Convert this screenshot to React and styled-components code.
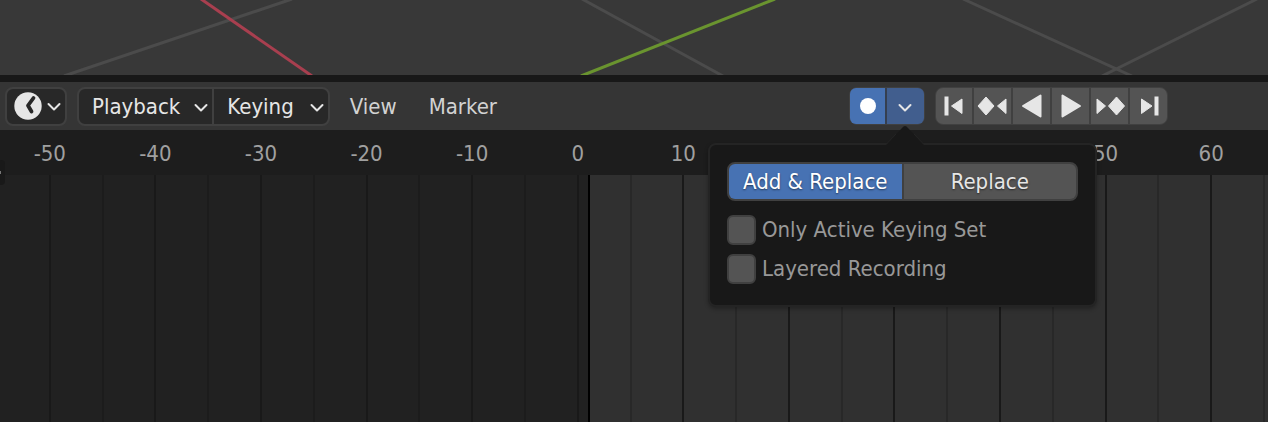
import React, { useState } from 'react'
import styled, { createGlobalStyle } from 'styled-components'

const FIRST = -55
const LAST = 65
const CURRENT = 1
const frames = [-50, -40, -30, -20, -10, 0, 10, 20, 30, 40, 50, 60]
const toPercent = (frame) => `${((frame - FIRST) / (LAST - FIRST)) * 100}%`

const Chevron = ({ size = 14 }) => (
    <svg width={size} height={size} viewBox="0 0 14 14" fill="none" stroke="currentColor" strokeWidth="2" strokeLinecap="round" strokeLinejoin="round" aria-hidden="true">
        <path d="M1.500 5l5.500 5.500L12.500 5" />
    </svg>
)

const ClockIcon = () => (
    <svg width="28" height="28" viewBox="0 0 28 28" aria-hidden="true">
        <circle cx="14" cy="14" r="13.700" fill="#e6e6e6" />
        <path d="M19.500 6L14 13.500l3.500 6" fill="none" stroke="#282828" strokeWidth="3.800" strokeLinecap="round" strokeLinejoin="round" />
    </svg>
)

const Glyph = ({ children }) => (
    <svg width="36" height="36" viewBox="0 0 36 36" fill="#e6e6e6" stroke="#e6e6e6" strokeLinejoin="round" aria-hidden="true">
        {children}
    </svg>
)

const transport = [
    { label: 'Jump to first frame', icon: <><path stroke="none" d="M8.500 8.500h4v19h-4z" /><path d="M26 11v14.500L15.500 18z" /></> },
    { label: 'Previous keyframe', icon: <><path d="M11 9L19 18l-8 9L3 18z" /><path d="M31 11v14.500L22.500 18z" /></> },
    { label: 'Play reverse', icon: <path strokeWidth="2" d="M26.500 7.500v21L9 18z" /> },
    { label: 'Play', icon: <path strokeWidth="2" d="M9.500 7.500v21L27 18z" /> },
    { label: 'Next keyframe', icon: <><path d="M24.500 9L32.500 18l-8 9L16.500 18z" /><path d="M5 11v14.500L13.500 18z" /></> },
    { label: 'Jump to last frame', icon: <><path stroke="none" d="M23.500 8.500h4v19h-4z" /><path d="M10.500 11v14.500L21 18z" /></> },
]

const App = () => {
    const [mode, setMode] = useState('Add & Replace')

    return (
        <Screen>
            <GlobalStyle />
            <Viewport>
                <svg width="1268" height="75" viewBox="0 0 1268 75" fill="none" strokeWidth="3" aria-hidden="true">
                    <path stroke="#4b4b4b" d="M64 76L292 -1M582 -1L723 76M963 -1L1132 76M1102 76L1257 -1" />
                    <path stroke="#a83f4f" d="M201 -1L312 76" />
                    <path stroke="#6a942f" d="M581 76L775 -1" />
                </svg>
            </Viewport>
            <Toolbar>
                <EditorButton aria-label="Editor type">
                    <ClockIcon />
                    <Chevron />
                </EditorButton>
                <MenuGroup>
                    <MenuButton>Playback <Chevron /></MenuButton>
                    <MenuButton>Keying <Chevron /></MenuButton>
                </MenuGroup>
                <PlainMenu>View</PlainMenu>
                <PlainMenu>Marker</PlainMenu>
                <AutoKey>
                    <RecordButton aria-label="Auto keying">
                        <Dot />
                    </RecordButton>
                    <KeyOptions aria-label="Auto keying options" aria-expanded="true">
                        <Chevron />
                    </KeyOptions>
                    <Popover>
                        <Arrow width="38" height="20" viewBox="0 0 38 20" aria-hidden="true">
                            <path fill="#181818" d="M0 20L16 3Q19 -1 22 3L38 20z" />
                            <path fill="none" stroke="#242424" d="M0 19.500L10 9M28 9L38 19.500" />
                        </Arrow>
                        <Segments>
                            {['Add & Replace', 'Replace'].map((name) => (
                                <Segment key={name} $active={mode === name} onClick={() => setMode(name)}>
                                    {name}
                                </Segment>
                            ))}
                        </Segments>
                        <Option>
                            <Checkbox type="checkbox" />
                            Only Active Keying Set
                        </Option>
                        <Option>
                            <Checkbox type="checkbox" />
                            Layered Recording
                        </Option>
                    </Popover>
                </AutoKey>
                <Transport>
                    {transport.map(({ label, icon }) => (
                        <TransportButton key={label} aria-label={label}>
                            <Glyph>{icon}</Glyph>
                        </TransportButton>
                    ))}
                </Transport>
            </Toolbar>
            <Ruler>
                <Scale>
                    {frames.map((frame) => <Label key={frame}>{frame}</Label>)}
                </Scale>
                <RegionToggle aria-label="Show channels" />
            </Ruler>
            <Track>
                <Lanes>
                    <ActiveRange style={{ left: toPercent(CURRENT) }} />
                    {frames.map((frame) => <Lane key={frame}><Line /></Lane>)}
                    <Playhead style={{ left: toPercent(CURRENT) }} />
                </Lanes>
            </Track>
        </Screen>
    )
}

const GlobalStyle = createGlobalStyle`
    * {
        box-sizing: border-box;
    }
    body {
        margin: 0;
        background: #212121;
    }
    body, button {
        font-family: "DejaVu Sans Condensed", "DejaVu Sans", sans-serif;
        font-size: 22px;
        line-height: 26px;
    }
    button {
        margin: 0;
        padding: 0;
        border: none;
        background: none;
        color: #e6e6e6;
        cursor: pointer;
    }
    svg {
        display: block;
        flex: none;
    }
`

const Screen = styled.div`
    display: flex;
    flex-direction: column;
    min-height: 100vh;
    overflow: hidden;
`

const Viewport = styled.div`
    height: 82px;
    overflow: hidden;
    background: #383838;
    border-bottom: 7px solid #181818;
`

const Toolbar = styled.div`
    display: flex;
    align-items: center;
    height: 48px;
    padding: 0 100px 0 5px;
    background: #353535;
`

const EditorButton = styled.button`
    display: flex;
    align-items: center;
    gap: 5px;
    height: 39px;
    padding: 0 4px 0 7px;
    border: 2px solid #404040;
    border-radius: 8px;
    background: #282828;
`

const MenuGroup = styled.div`
    display: flex;
    height: 39px;
    margin: 0 4px 0 10px;
    border: 2px solid #404040;
    border-radius: 8px;
    background: #282828;
`

const MenuButton = styled.button`
    display: flex;
    align-items: center;
    gap: 14px;
    padding: 2px 4px 0 13px;

    & + & {
        gap: 16px;
        border-left: 2px solid #404040;
    }
`

const PlainMenu = styled.button`
    height: 38px;
    padding: 2px 16px 0;
    color: #d2d2d2;
`

const AutoKey = styled.div`
    position: relative;
    display: flex;
    gap: 2px;
    height: 38px;
    margin-left: auto;
    border: 1px solid #404040;
    border-radius: 8px;
    background: #353f50;
`

const RecordButton = styled.button`
    display: flex;
    align-items: center;
    justify-content: center;
    width: 35px;
    border-radius: 6px 0 0 6px;
    background: #4772b3;
`

const Dot = styled.span`
    width: 16px;
    height: 16px;
    border-radius: 50%;
    background: #fff;
`

const KeyOptions = styled.button`
    display: flex;
    align-items: center;
    justify-content: center;
    width: 37px;
    padding: 2px 2px 0 0;
    border-radius: 0 6px 6px 0;
    background: #415e8e;
`

const Popover = styled.div`
    position: absolute;
    z-index: 1;
    top: 55px;
    right: -173px;
    width: 389px;
    padding: 17px 17px 21px;
    border: 2px solid #242424;
    border-radius: 8px;
    background: #181818;
    box-shadow: 0 2px 4px rgba(0, 0, 0, 0.3);
`

const Arrow = styled.svg`
    position: absolute;
    top: -20px;
    left: 176px;
`

const Segments = styled.div`
    display: flex;
    gap: 2px;
    height: 39px;
    margin-bottom: 14px;
    border: 2px solid #404040;
    border-radius: 8px;
    background: #404040;
`

const Segment = styled.button`
    flex: 1 1 0;
    background: ${({ $active }) => ($active ? '#4772b3' : '#545454')};
    color: ${({ $active }) => ($active ? '#fff' : '#e6e6e6')};
    text-shadow: 0 1px 2px rgba(0, 0, 0, 0.5);

    &:first-child {
        border-radius: 6px 0 0 6px;
    }
    &:last-child {
        border-radius: 0 6px 6px 0;
    }
`

const Option = styled.label`
    display: flex;
    align-items: center;
    gap: 6px;
    height: 30px;
    color: #989898;

    & + & {
        margin-top: 9px;
    }
`

const Checkbox = styled.input`
    appearance: none;
    width: 29px;
    height: 30px;
    margin: 0;
    border: 2px solid #404040;
    border-radius: 6px;
    background: #545454;

    &:checked {
        background: #4772b3;
    }
`

const Transport = styled.div`
    display: flex;
    gap: 2px;
    height: 38px;
    margin-left: 10px;
    border: 1px solid #404040;
    border-radius: 8px;
    background: #404040;
    overflow: hidden;
`

const TransportButton = styled.button`
    display: flex;
    align-items: center;
    justify-content: center;
    width: 37px;
    background: #545454;

    &:first-child {
        width: 36px;
    }
`

const Ruler = styled.div`
    position: relative;
    height: 45px;
    background: #1d1d1d;
`

const Scale = styled.div`
    display: grid;
    grid-template-columns: repeat(12, 1fr);
    margin: 0 4px 0 -3px;
`

const Label = styled.span`
    line-height: 48px;
    color: #a0a0a0;
    text-align: center;
`

const RegionToggle = styled.button`
    position: absolute;
    z-index: 1;
    left: 0;
    bottom: -10px;
    width: 5px;
    height: 25px;
    border-radius: 0 4px 4px 0;
    background: #191919;

    &::before {
        content: '';
        display: block;
        width: 1px;
        height: 3px;
        background: #777;
    }
`

const Track = styled.div`
    display: flex;
    flex: 1;
    overflow: hidden;
    min-height: 247px;
`

const Lanes = styled.div`
    position: relative;
    flex: 1;
    display: grid;
    grid-template-columns: repeat(12, 1fr);
    margin: 0 3px 0 -2px;
`

const Lane = styled.div`
    position: relative;
    display: flex;
    justify-content: center;
    border-right: 2px solid rgba(0, 0, 0, 0.15);
`

const Line = styled.span`
    width: 2px;
    background: #191919;
`

const ActiveRange = styled.div`
    position: absolute;
    top: 0;
    bottom: 0;
    right: -4px;
    background: #303030;
`

const Playhead = styled.div`
    position: absolute;
    top: 0;
    bottom: 0;
    width: 2px;
    margin-left: -1px;
    background: #000;
`

export default App
